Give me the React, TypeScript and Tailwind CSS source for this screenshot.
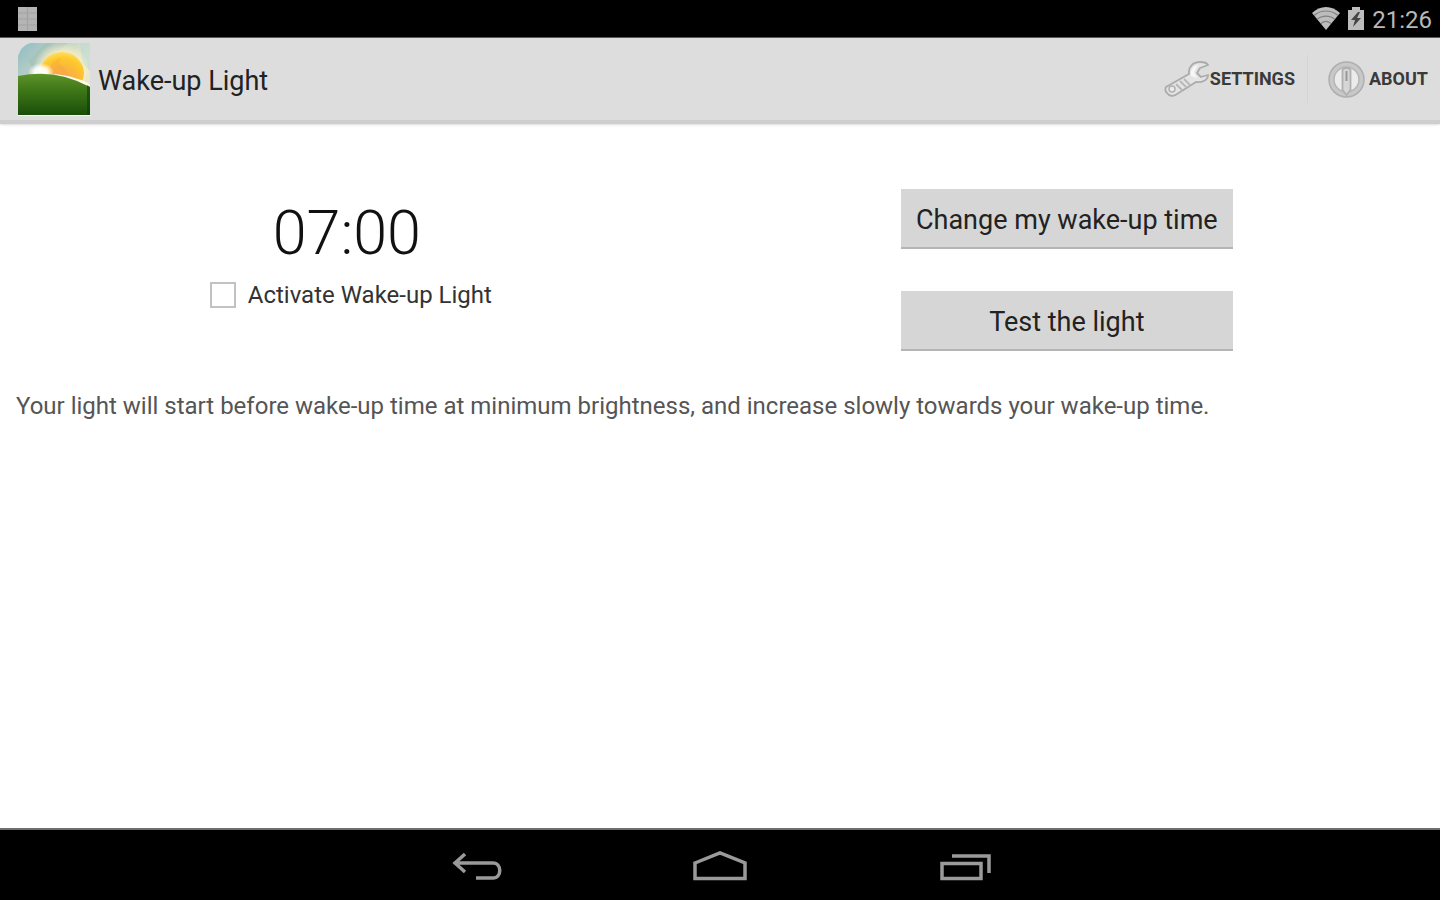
import { useState } from "react";

function StatusBar() {
  return (
    <div className="flex h-[38px] items-center justify-between border-b border-[#5a5a5a] bg-black pl-[18px] pr-2">
      <svg width="19" height="24" viewBox="0 0 19 24" aria-hidden="true">
        <rect width="19" height="24" fill="#b4b4b4" />
        <path d="M9.5 0v24M0 6h19M0 12h19M0 18h19" stroke="#a2a2a2" strokeWidth="1.2" />
      </svg>
      <div className="flex items-center gap-2">
        <svg width="28" height="23" viewBox="0 0 28 23" aria-hidden="true">
          <path d="M0 6C8-2 20-2 28 6L14 23z" fill="#bdbdbd" />
          <path
            d="M2 8.500C9 2.500 19 2.500 26 8.500M5 12.500C10 8 18 8 23 12.500M9 16.500C12 14 16 14 19 16.500"
            fill="none"
            stroke="#808080"
            strokeWidth="1.200"
          />
        </svg>
        <svg width="16" height="23" viewBox="0 0 16 23" aria-hidden="true">
          <path d="M0 3h4V0h8v3h4v20H0z" fill="#bdbdbd" />
          <path d="M10 5L3 13h4l-2 7 8-9H9l3-6z" fill="#444" />
        </svg>
        <span className="pt-0.5 text-2xl leading-8 text-[#b8b8b8]">21:26</span>
      </div>
    </div>
  );
}

function AppIcon() {
  return (
    <svg width="73" height="73" viewBox="0 0 73 73" aria-hidden="true">
      <defs>
        <linearGradient id="sky" x1="0" y1="0" x2="1" y2="1">
          <stop offset="0" stopColor="#8fbcc4" />
          <stop offset="0.3" stopColor="#b9cfc4" />
          <stop offset="0.6" stopColor="#f2ecc8" />
          <stop offset="1" stopColor="#d5dfcc" />
        </linearGradient>
        <radialGradient id="glow">
          <stop offset="0" stopColor="#ffe9a0" />
          <stop offset="0.6" stopColor="#fdf0c0" stopOpacity="0.9" />
          <stop offset="1" stopColor="#fdf3d0" stopOpacity="0" />
        </radialGradient>
        <radialGradient id="sun" cx="0.5" cy="0.7" r="0.7">
          <stop offset="0" stopColor="#f6a96a" />
          <stop offset="0.45" stopColor="#fbb43c" />
          <stop offset="0.8" stopColor="#fdca2c" />
          <stop offset="1" stopColor="#fddf62" />
        </radialGradient>
        <radialGradient id="flare">
          <stop offset="0" stopColor="#fff" />
          <stop offset="0.5" stopColor="#fff" stopOpacity="0.9" />
          <stop offset="1" stopColor="#fff" stopOpacity="0" />
        </radialGradient>
        <linearGradient id="hill" x1="0" y1="0" x2="0" y2="1">
          <stop offset="0" stopColor="#5f942a" />
          <stop offset="0.4" stopColor="#3f7718" />
          <stop offset="1" stopColor="#194e08" />
        </linearGradient>
      </defs>
      <path d="M12 0H72V72H0V13Q3 3 12 0z" fill="url(#sky)" />
      <path d="M28 0L10 18 16 28 50 0z" fill="#94b5a5" opacity="0.3" />
      <path d="M62 0h10v28l-8-8z" fill="#b7d8d5" opacity="0.6" />
      <circle cx="43" cy="27" r="28" fill="url(#glow)" />
      <ellipse cx="44" cy="30" rx="22" ry="21" fill="url(#sun)" />
      <path d="M30 28q5-12 13-13-3 4-1 7 7 3 10 13z" fill="#f59b45" opacity="0.3" />
      <ellipse cx="23" cy="29" rx="13" ry="9" fill="url(#flare)" />
      <path d="M22 31Q48 29 72 41V47L22 34z" fill="#fffbe8" />
      <path d="M0 33Q38 25 72 44V72H0z" fill="url(#hill)" />
      <path d="M69 42L72 44V72H69z" fill="#07400b" opacity="0.6" />
      <path d="M0 72.500H73" stroke="#f4f7ef" />
    </svg>
  );
}

function WrenchIcon() {
  return (
    <svg width="46" height="36" viewBox="0 0 46 36" aria-hidden="true">
      <path
        d="M2 26L25 13C24 6 29 1 36 1c4 0 7 1 8 3l-8 3-3 5 4 4 7-2c0 5-6 8-12 7L13 33c-4 3-8 2-10-1-2-2-2-4-1-6z"
        fill="#e4e4e4"
        stroke="#ababab"
        strokeWidth="1.800"
        strokeLinejoin="round"
      />
      <path d="M27 15c-1-6 2-10 7-11l-4 7 3 6z" fill="#f7f7f7" />
      <path d="M12 23l6 6M16 20l6 6M20 18l6 6" stroke="#b8b8b8" strokeWidth="2" />
      <circle cx="8" cy="28" r="3" fill="#ececec" stroke="#b0b0b0" strokeWidth="1.500" />
    </svg>
  );
}

function AboutIcon() {
  return (
    <svg width="37" height="37" viewBox="0 0 37 37" aria-hidden="true">
      <circle cx="18.500" cy="18.500" r="15" fill="#dedede" stroke="#c8c8c8" strokeWidth="5" />
      <circle cx="18.500" cy="18.500" r="17.500" fill="none" stroke="#afafaf" strokeWidth="1.500" />
      <circle cx="18.500" cy="18.500" r="12.500" fill="#ebebeb" stroke="#b5b5b5" strokeWidth="1.500" />
      <path d="M14.500 8.500q4-3 8 0V29l-4 5-4-5z" fill="#d6d6d6" stroke="#b0b0b0" strokeWidth="1.800" />
      <path d="M18.500 10v10" stroke="#999" strokeWidth="2" />
    </svg>
  );
}

function ActionBar() {
  return (
    <header className="flex h-[86px] items-center justify-between border-b-4 border-[#cecece] bg-[#dddddd] pl-[18px] pr-3 shadow-sm">
      <div className="flex items-center gap-[7px]">
        <AppIcon />
        <h1 className="pt-1 text-[27px] leading-8 text-[#222]">Wake-up Light</h1>
      </div>
      <nav className="flex items-center">
        <button className="flex items-center text-lg font-bold text-[#3a3a3a]">
          <WrenchIcon />
          SETTINGS
        </button>
        <div className="ml-3 mr-5 h-12 w-px bg-[#d4d4d4]" />
        <button className="flex items-center gap-1 text-lg font-bold text-[#3a3a3a]">
          <AboutIcon />
          ABOUT
        </button>
      </nav>
    </header>
  );
}

function NavigationBar() {
  return (
    <nav className="flex h-[72px] items-center justify-center gap-[190px] border-t-2 border-[#6e6e6e] bg-black pt-1">
      <button aria-label="Back">
        <svg width="54" height="32" viewBox="0 0 54 32" fill="none" stroke="#9a9a9a" strokeWidth="3.500">
          <path d="M16 3L6 12l10 9M6 12h38c9 0 9 15 0 15H27" />
        </svg>
      </button>
      <button aria-label="Home">
        <svg width="54" height="32" viewBox="0 0 54 32" fill="none" stroke="#9a9a9a" strokeWidth="3.500">
          <path d="M2 12L27 2l25 10v15.500H2z" />
        </svg>
      </button>
      <button aria-label="Recent apps">
        <svg width="54" height="32" viewBox="0 0 54 32" fill="none" stroke="#9a9a9a" strokeWidth="3.500">
          <path d="M5 12.500h39v15H5zM15 5h37v17" />
        </svg>
      </button>
    </nav>
  );
}

const actionButton =
  "h-[60px] w-[332px] border-b-2 border-[#b5b5b5] bg-[#d6d6d6] pt-1 text-[27px] leading-8 text-[#222]";

export default function App() {
  const [active, setActive] = useState(false);

  return (
    <div className="flex min-h-screen flex-col bg-white font-[Roboto,sans-serif]">
      <StatusBar />
      <ActionBar />
      <main className="flex-1">
        <div className="flex pr-2 pt-[65px]">
          <section className="flex w-[49%] flex-col items-center pt-3">
            <time className="pr-2 text-[61px] leading-[64px] font-light text-[#111]">07:00</time>
            <label className="mt-[14px] flex items-center gap-3 text-2xl leading-8 text-[#333]">
              <input
                type="checkbox"
                checked={active}
                onChange={(e) => setActive(e.target.checked)}
                className="size-[26px] appearance-none border-2 border-[#c2c2c2] bg-white checked:bg-[#33b5e5]"
              />
              Activate Wake-up Light
            </label>
          </section>
          <section className="flex flex-1 flex-col items-center gap-[42px]">
            <button className={actionButton}>Change my wake-up time</button>
            <button className={actionButton}>Test the light</button>
          </section>
        </div>
        <p className="mt-[39px] px-4 text-2xl leading-8 text-[#555]">
          Your light will start before wake-up time at minimum brightness, and increase slowly
          towards your wake-up time.
        </p>
      </main>
      <NavigationBar />
    </div>
  );
}
